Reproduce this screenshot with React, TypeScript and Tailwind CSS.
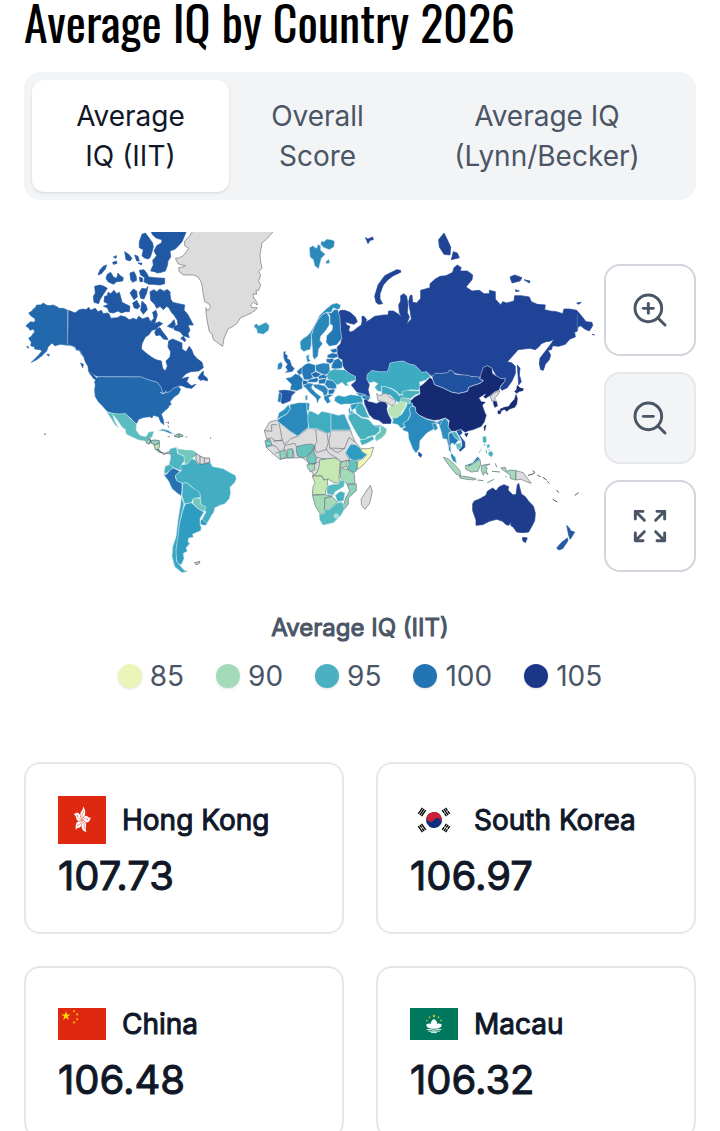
import { useState } from "react";
import { ZoomIn, ZoomOut } from "lucide-react";

type Shape = [fill: string, points: string];

const NO_DATA = "#dcdcdc";

// Americas, northern half
const northAmerica: Shape[] = [
  ["#2268ad", "143,256 130,250 118,250 112,246 100,240 88,242 78,240 70,234 62,240 50,240 46,248 40,252 36,258 26,264 34,274 44,280 46,288 40,292 32,290 22,298 18,304 26,308 30,316 40,312 44,320 34,334 26,340 34,352 32,362 44,366 44,372 60,374 66,378 56,390 38,408 34,412 50,404 66,392 80,378 84,366 96,354 104,362 122,358 143,361"],
  ["#2158a3", "146,256 165,264 178,254 190,252 198,254 206,247 212,256 226,250 234,260 244,256 250,266 262,264 268,268 272,280 292,278 302,272 316,276 328,284 340,280 350,284 356,274 368,282 384,276 392,290 402,280 398,262 408,256 412,270 404,296 418,290 428,296 414,306 410,312 396,316 386,330 376,336 366,356 364,372 378,384 394,396 408,404 424,408 428,430 436,438 442,424 438,408 450,396 452,380 444,366 446,348 458,342 472,348 486,354 486,372 498,380 508,364 516,376 520,388 530,400 546,412 550,428 536,438 512,440 498,446 482,462 496,458 506,456 500,470 514,482 528,478 516,490 500,488 486,482 480,482 474,488 460,490 450,500 428,506 424,488 412,472 384,464 362,456 232,454 220,448 206,438 204,424 196,410 192,398 184,388 178,376 170,376 164,366 154,362 143,361"],
  ["#2268ad", "234,456 362,457 386,465 412,473 424,488 428,506 450,500 460,490 474,486 482,492 476,506 462,516 450,530 452,536 454,537 440,550 446,547 430,561 424,567 430,585 432,599 422,591 416,575 400,571 396,579 390,575 372,577 356,583 350,595 342,591 334,579 324,573 316,567 292,567 276,563 262,559 248,543 236,531 226,515 224,495 226,480 224,470"],
  ["#2158a3", "388,8 510,8 498,22 486,50 474,64 466,72 450,78 452,96 444,108 442,122 436,138 424,142 412,144 404,140 392,138 396,128 400,120 398,106 410,92 402,78 410,62 424,54 426,44 410,40 398,30"],
  ["#2158a3", "358,50 366,28 376,24 388,40 398,54 400,66 394,88 390,98 384,102 372,98 366,92 370,74 358,68"],
  ["#2158a3", "358,136 372,134 380,144 386,156 404,158 434,160 434,176 420,180 398,178 386,178 372,170 374,158 362,150"],
  ["#2158a3", "330,144 342,140 348,152 350,166 338,172 332,164"],
  ["#2158a3", "358,156 368,160 368,170 360,170"],
  ["#2158a3", "314,80 326,88 336,100 330,108 318,104"],
  ["#2158a3", "344,90 354,94 358,108 350,108"],
  ["#2158a3", "234,150 240,134 250,124 260,120 256,132 244,146"],
  ["#2158a3", "258,160 262,148 272,142 280,156 290,160 294,144 298,150 310,158 308,168 290,170 280,178 264,170"],
  ["#2158a3", "280,96 290,92 288,100"],
  ["#2158a3", "278,112 290,108 290,116 280,118"],
  ["#2158a3", "354,114 366,114 364,120"],
  ["#2158a3", "224,184 240,180 252,184 262,190 250,208 240,224 236,236 222,232 220,214 226,204"],
  ["#2158a3", "254,214 262,212 264,202 272,206 282,196 290,206 298,202 302,216 306,232 318,238 330,244 328,260 316,260 304,264 294,258 280,264 268,262 262,248 250,244 266,238 252,230"],
  ["#2158a3", "330,204 340,192 350,198 352,216 342,224"],
  ["#2158a3", "358,202 366,190 378,192 384,184 380,204 372,222 362,220"],
  ["#2158a3", "338,234 350,226 360,244 352,252 342,248"],
  ["#2158a3", "366,228 378,240 382,254 370,268 362,256"],
  ["#2158a3", "390,200 402,194 410,200 420,192 430,198 450,206 452,222 458,232 476,236 494,240 492,256 502,266 516,292 520,300 504,300 510,316 504,326 508,338 490,332 480,320 462,314 462,304 474,300 472,286 462,270 454,262 448,250 440,244 430,254 420,244 410,250 404,238 392,226"],
  ["#2158a3", "434,196 444,194 452,204 440,204"],
  ["#2158a3", "404,322 410,312 420,308 426,318 440,336 444,344 430,342 420,330 408,332"],
  ["#2158a3", "482,340 490,334 498,346 494,350"],
  ["#2158a3", "452,296 462,284 466,298 458,310 442,304"],
  ["#2158a3", "534,458 542,446 550,438 550,450 562,460 562,468 550,464 540,466"],
  ["#2158a3", "206,440 218,448 230,460 234,468 220,460"],
  ["#2158a3", "182,414 190,418 188,428"],
  ["#2268ad", "80,388 88,388 86,394"],
  ["#2268ad", "20,364 26,366 24,370"],
];

const greenland =
  "66,6 66,22 58,34 44,48 44,62 56,70 40,92 28,98 16,100 24,116 36,120 46,122 38,126 26,128 28,140 40,150 70,150 84,156 92,168 96,180 98,196 100,210 104,230 116,236 122,246 112,258 108,248 108,262 112,290 118,320 126,326 130,344 146,356 158,364 162,340 174,312 186,306 200,296 212,278 226,272 240,266 256,256 262,248 246,248 242,240 250,232 262,240 262,234 250,216 250,206 260,208 258,196 266,196 272,180 266,168 272,150 266,140 276,130 272,110 270,90 276,54 290,42 308,22 320,6";

// Americas, southern half
const southAmerica: Shape[] = [
  ["#5bbdbf", "260,66 276,70 300,72 316,70 330,84 342,96 350,102 348,120 360,136 378,140 386,126 402,124 396,142 384,146 378,154 356,150 334,140 318,132 316,118 308,114 290,88 278,74 284,92 296,114 286,106 272,84"],
  ["#2c8abd", "414,122 428,117 444,121 456,128 462,132 448,130 430,122"],
  ["#4db6c0", "448,178 458,174 470,172 472,190 492,198 496,210 486,222 484,242 462,234 446,226 452,204"],
  ["#72c8bd", "472,176 484,178 500,180 514,180 526,184 530,196 516,206 512,216 502,222 494,222 492,198 474,190"],
  ["#46b0bf", "436,228 450,224 460,234 442,248 436,252 432,246"],
  ["#2472b2", "430,252 438,254 444,248 450,240 460,234 480,244 466,258 468,268 476,274 486,280 486,300 484,318 470,308 456,296 446,274"],
  ["#43aec2", "484,242 482,230 486,224 502,222 516,206 526,210 534,222 570,216 578,230 590,232 610,236 620,242 646,256 649,266 644,278 630,292 632,310 628,326 614,342 600,346 584,354 582,366 576,374 560,402 546,388 558,366 550,356 542,340 540,314 526,300 510,286 500,278 488,280 470,272 466,256"],
  ["#41adc2", "488,280 500,278 516,292 538,306 542,322 520,326 514,338 494,342 486,318"],
  ["#72c8bd", "520,326 530,324 540,326 544,344 558,350 554,364 546,362 534,356 518,340"],
  ["#3399bf", "546,386 562,402 556,406 550,406 540,402 542,392"],
  ["#2f9dc1", "496,342 514,338 534,356 552,366 540,386 540,404 544,412 542,422 524,430 518,432 520,442 506,444 504,456 510,460 498,474 502,484 490,490 492,506 484,524 472,520 466,490 472,440 478,400 490,356"],
  ["#3ba8c0", "484,318 492,342 488,360 478,400 474,440 468,480 470,514 480,526 492,540 504,544 486,548 464,530 456,500 458,470 468,440 474,390 482,340"],
];

const southAmericaOutlined: Shape[] = [
  ["#8cd1bb", "378,154 388,144 392,152 388,162 380,160"],
  ["#8cd1bb", "390,152 404,150 418,152 418,160 404,166 396,160"],
  ["#c5e8b3", "402,166 418,160 418,172 414,180 406,178"],
  ["#5bbdbf", "408,178 418,180 424,188 416,186"],
  [NO_DATA, "422,186 436,190 448,184 450,192 440,190 430,194"],
  [NO_DATA, "528,190 540,198 552,204 568,204 570,216 552,222 536,222 528,210"],
  ["#8cd1bb", "462,138 472,132 482,132 490,138 478,142 466,140"],
  [NO_DATA, "524,518 540,514 536,522 528,524"],
];

// Russian mainland and islands
const russia: Shape[] = [
  ["#1f4396", "266,262 272,256 284,256 300,262 316,276 322,290 312,298 296,294 286,290 290,300 300,304 296,314 300,322 310,318 322,308 334,300 336,290 336,274 342,274 350,284 346,292 360,284 374,274 388,272 402,270 414,270 416,258 430,258 446,268 454,276 448,262 446,240 452,228 452,212 462,206 470,214 474,240 472,262 478,276 470,298 484,282 480,256 476,230 480,212 486,210 488,232 500,234 512,220 512,196 540,188 540,176 556,162 570,154 588,152 600,146 608,142 612,128 622,120 634,128 630,138 652,138 668,150 666,164 648,186 666,198 688,196 702,206 718,206 718,196 736,200 736,222 752,240 758,230 770,234 792,228 794,212 814,212 838,216 844,230 862,238 886,240 884,254 900,258 920,260 938,266 942,252 958,252 980,256 994,272 1008,290 1026,292 1028,302 1018,318 1004,312 992,302 984,306 982,318 974,322 976,336 960,342 946,358 926,364 908,362 904,374 894,376 902,390 898,404 886,418 880,436 872,434 868,416 870,400 882,384 896,366 906,352 912,342 902,348 888,350 874,356 866,366 856,374 840,370 804,374 796,384 772,410 786,414 796,424 796,446 786,468 772,488 756,496 750,488 760,476 768,462 756,460 746,460 738,450 728,432 718,424 704,424 700,440 696,456 678,456 642,450 614,444 598,434 594,446 558,446 546,454 530,440 516,442 494,420 480,418 460,408 440,410 420,414 416,430 412,440 386,440 366,436 352,448 350,462 358,480 354,494 358,510 360,520 338,510 320,500 312,490 304,480 318,468 316,454 300,446 286,434 278,420 278,404 266,398 262,384 262,366 272,356 276,340 270,320 272,300 266,280"],
  ["#1f4396", "378,232 374,214 384,180 404,152 420,144 440,134 452,136 452,142 430,152 414,164 400,180 390,206 390,222 398,236 386,238"],
  ["#1f4396", "346,38 354,42 368,36 370,44 360,46 354,56 350,46"],
  ["#1f4396", "566,44 582,24 590,40 602,66 600,90 582,88 568,66"],
  ["#1f4396", "604,104 610,80 622,84 628,98"],
  ["#1f4396", "780,156 794,150 816,158 810,168 786,174"],
  ["#1f4396", "822,164 840,168 838,174"],
  ["#1f4396", "796,194 808,198 798,200"],
  ["#1f4396", "980,234 994,232 986,238"],
  ["#1f4396", "802,420 810,430 808,450 814,470 806,480 804,450"],
];

// Europe, central Asia and the Middle East
const eurasia: Shape[] = [
  ["#2b8ab9", "178,68 188,62 200,70 204,58 212,62 212,76 226,88 214,100 206,132 194,122 190,104 180,96"],
  ["#2b8ab9", "214,48 222,50 230,42 244,44 254,48 252,66 238,74 222,68 212,58"],
  ["#2b8ab9", "228,110 236,102 240,114 228,116"],
  ["#3399bf", "12,300 20,296 26,302 48,292 58,302 56,316 40,328 22,324 20,312 14,308"],
  ["#2c8fbb", "152,372 150,350 160,340 170,334 180,324 196,296 208,272 228,252 246,238 260,234 272,240 270,250 262,254 250,248 244,262 230,262 218,268 204,284 192,306 184,332 184,360 180,374 170,376 162,380"],
  ["#2a88b9", "188,384 186,356 184,332 192,306 204,284 218,268 230,262 238,276 238,300 228,316 212,334 210,346 218,356 206,372 204,392 194,404 188,394"],
  ["#2279b5", "232,262 244,264 252,254 264,254 270,280 272,318 276,340 260,360 238,364 228,352 230,332 246,316 248,302 240,296 240,272"],
  ["#2472b2", "240,374 260,370 262,382 248,384"],
  ["#2472b2", "232,390 246,384 262,386 264,396 252,400 232,398"],
  ["#2472b2", "228,402 250,400 252,408 242,416 230,412"],
  ["#2279b5", "244,430 246,418 254,404 266,400 278,414 276,430 256,432"],
  ["#2c8fbb", "168,394 178,388 176,400 182,408 172,412"],
  ["#2067ad", "100,380 108,378 106,386 114,392 112,400 120,404 126,422 134,430 128,440 104,444 112,436 106,426 112,418 104,408 100,396"],
  ["#2b85bb", "84,416 94,410 98,420 94,432 82,434"],
  ["#2472b2", "140,440 152,428 158,426 156,446 148,450"],
  ["#2279b5", "156,426 166,418 176,414 196,420 196,440 184,446 190,458 178,464 162,464 156,446"],
  ["#2b85bb", "196,420 220,414 238,416 240,436 236,446 226,450 214,446 198,438"],
  ["#2279b5", "106,460 124,456 136,446 148,450 160,464 156,474 158,490 140,498 120,494 124,478"],
  ["#2157a3", "86,496 104,494 120,496 138,500 126,512 122,528 98,538 92,532"],
  ["#2279b5", "86,503 95,505 92,532 83,530"],
  ["#2067ad", "184,446 198,440 214,448 200,458 190,456"],
  ["#2472b2", "176,464 200,458 206,464 200,472 172,472"],
  ["#2067ad", "158,466 174,468 172,478 158,480"],
  ["#2279b5", "204,454 220,448 234,454 228,460 206,462"],
  ["#2472b2", "206,464 230,460 224,476 206,476"],
  ["#2b85bb", "230,464 248,466 258,478 260,490 248,492 234,490 224,478"],
  ["#2472b2", "234,494 256,492 250,506 236,508"],
  ["#2b85bb", "188,478 206,478 224,482 234,494 232,508 222,514 218,502 208,496 194,488"],
  ["#2b85bb", "222,514 238,508 250,510 236,518 242,530 232,536 222,522"],
  ["#2b85bb", "158,482 176,474 190,476 184,488 196,502 214,516 208,522 202,536 198,520 178,502 168,490"],
  ["#2b85bb", "166,512 172,510 172,524 166,526"],
  ["#41adc0", "238,438 254,432 270,434 284,434 300,446 316,454 316,466 300,470 290,474 296,482 286,482 276,472 262,480 256,476 248,466 234,464 230,452"],
  ["#3dabc1", "350,462 352,448 366,436 386,440 412,440 416,430 420,414 440,410 460,408 480,418 494,420 516,442 530,440 542,454 526,466 508,472 510,482 506,496 480,494 462,502 450,510 438,498 424,490 408,486 394,484 394,500 382,498 374,486 384,476 372,470 358,474"],
  ["#3ba8c0", "394,484 410,486 424,492 438,500 448,512 462,506 460,514 472,520 456,524 446,534 430,520 420,510 404,506 396,512"],
  ["#46b0bf", "456,500 470,496 508,498 510,505 494,511 482,521 460,519 458,509"],
  ["#72c8bd", "452,518 460,521 480,521 488,533 470,535 452,533"],
  ["#2f9dc1", "255,517 265,511 283,515 301,509 319,511 333,513 337,523 339,533 319,535 303,537 285,537 273,539 261,533 253,527"],
  ["#2b8abd", "317,503 333,505 347,509 345,513 329,513"],
  ["#2b8abd", "333,513 345,511 361,517 355,527 343,525"],
  ["#1b3484", "341,525 349,521 355,529 367,531 379,535 391,529 407,531 413,541 411,553 417,571 425,585 423,597 399,597 387,587 371,583 357,569 349,551 343,537"],
  ["#41adc0", "315,545 327,533 337,535 345,549 351,565 359,579 337,577 319,565 317,555"],
  ["#2f9dc1", "301,539 327,533 317,549 305,557"],
  ["#46b0bf", "297,561 305,557 313,561 299,571"],
  ["#2472b2", "295,555 301,545 299,569"],
  ["#47b2bd", "295,571 311,563 321,569 335,579 355,583 363,591 369,599 381,603 389,607 389,619 375,631 355,635 345,643 331,643 323,631 315,617 303,595 295,581"],
  ["#47b2bd", "329,645 345,643 367,633 373,643 351,655 335,661"],
  ["#6cc5bd", "375,641 377,631 391,621 391,607 395,601 411,613 407,627 395,639 379,649"],
  ["#2f9dc1", "371,601 389,601 393,597 389,607 375,603"],
];

// Southern Asia and Oceania
const asiaPacific: Shape[] = [
  ["#152a72", "92,92 104,80 120,72 118,50 132,40 150,22 158,28 164,44 190,54 214,66 236,70 262,64 266,52 280,46 300,40 310,32 298,26 302,16 306,4 310,-8 322,-13 336,-6 338,10 346,16 364,26 376,24 374,34 362,48 358,60 344,66 330,78 316,86 310,80 316,72 298,84 304,94 318,96 308,106 316,128 320,136 314,156 304,170 280,180 264,184 256,188 244,180 226,184 212,184 204,170 208,152 196,144 178,150 164,152 140,146 118,136 106,124 106,112 92,102"],
  ["#2052a0", "156,19 166,10 186,10 204,8 208,0 220,4 224,12 240,14 264,16 276,20 288,20 302,22 298,26 310,32 300,40 280,46 266,52 262,64 236,70 214,66 190,54 164,44 158,28"],
  ["#152a72", "338,94 350,92 354,108 344,114 340,104"],
  ["#2f9dc1", "36,142 48,144 64,134 78,112 82,100 98,100 98,108 88,116 92,132 84,150 70,160 74,172 62,174 54,164 36,160 40,150"],
  ["#b8e4b5", "26,114 34,108 50,102 62,94 72,96 78,94 76,112 66,124 62,134 48,144 32,140 24,128"],
  ["#2b8abd", "94,108 106,112 108,126 118,136 140,148 164,154 178,152 194,146 186,156 180,170 176,162 168,160 162,178 152,182 140,190 120,212 118,236 108,250 98,236 86,206 84,186 72,182 66,176 76,172 70,160 86,148 92,132 88,116"],
  [NO_DATA, "164,152 176,150 176,156 166,157"],
  ["#2f8fbe", "156,160 168,160 174,176 164,182"],
  ["#2f8fbe", "178,168 188,150 196,144 206,156 204,170 214,184 206,190 208,212 214,236 206,232 200,208 188,206 184,186"],
  ["#2279b5", "206,192 216,186 226,204 236,210 224,224 216,218 210,228 214,248 206,240 208,222"],
  ["#2f8fbe", "214,248 226,262 230,280 218,272 212,258"],
  ["#46b0bf", "216,184 228,186 244,216 230,206 222,200"],
  ["#2052a0", "228,182 244,178 248,190 240,196 256,216 256,232 240,246 236,240 246,226 244,210"],
  ["#66c2bd", "226,222 244,218 244,232 232,240"],
  ["#46b0bf", "308,200 318,198 320,214 316,220 308,216"],
  ["#46b0bf", "320,224 328,222 330,230 322,236"],
  ["#46b0bf", "324,248 334,242 340,252 334,262 326,256"],
  ["#8cd1bb", "296,246 306,234 304,240 298,250"],
  ["#2279b5", "260,284 278,278 292,260 300,266 280,280 268,288"],
];

// Countries whose whole border is coast
const islands: Shape[] = [
  ["#152a72", "404,64 410,60 412,46 420,54 430,56 428,62 418,64 410,70"],
  ["#152a72", "408,74 412,86 410,102 404,112 390,116 380,124 374,118 362,122 360,118 374,112 386,110 394,98 404,88"],
  ["#152a72", "354,122 364,124 360,132 354,130"],
  ["#2052a0", "116,246 126,254 122,262 116,256"],
  ["#152a72", "254,192 264,190 260,200"],
  ["#152a72", "312,170 318,165 314,182"],
  ["#1f3c8c", "278,402 282,394 300,386 318,376 322,364 338,354 348,362 358,350 372,344 386,350 384,360 398,374 408,374 412,344 416,340 424,372 436,380 446,394 460,408 466,430 464,452 456,468 446,486 428,488 410,486 400,472 392,466 394,456 386,466 378,464 368,454 350,448 328,454 308,464 288,466 288,450 278,422"],
  ["#1f3c8c", "428,502 442,504 436,518 428,512"],
  ["#2157a3", "560,466 568,474 572,482 584,486 576,500 570,508 566,496"],
  ["#2157a3", "530,534 546,516 562,504 564,512 548,536 536,540"],
];

const asiaOutlined: Shape[] = [
  [NO_DATA, "-10,70 -4,76 6,76 10,70 24,72 30,82 48,92 46,100 36,108 20,98 4,94 -6,92"],
  [NO_DATA, "330,80 344,68 360,62 354,74 344,84 346,90 336,94 334,86"],
  ["#a3dbb8", "190,262 204,266 224,284 240,302 242,318 228,312 208,288"],
  ["#a3dbb8", "238,318 262,320 288,326 284,330 260,328 240,324"],
  ["#a3dbb8", "256,286 268,288 282,280 300,268 302,282 294,304 274,306 258,298"],
  ["#a3dbb8", "304,286 330,282 314,290 322,294 318,302 324,314 314,306 310,316 304,304"],
  ["#a3dbb8", "362,294 376,292 380,304 390,300 408,302 408,330 392,326 390,314 374,304"],
  [NO_DATA, "408,302 430,308 440,322 454,340 436,334 424,328 408,330"],
];

const africaOutlined: Shape[] = [
  [NO_DATA, "28,182 44,156 66,150 106,184 130,198 160,174 186,178 216,190 228,182 288,182 292,196 300,214 316,234 300,230 280,238 272,250 284,270 258,276 240,266 214,268 196,272 196,300 186,308 176,316 168,300 160,276 140,262 122,264 96,264 74,268 50,248 34,232 36,210"],
  ["#8cd1bb", "74,244 92,240 96,262 76,268"],
  ["#8cd1bb", "98,238 112,236 114,262 98,264"],
  ["#66c2bd", "30,212 44,208 52,226 34,232"],
  ["#66c2bd", "124,230 148,224 170,222 180,228 168,248 154,258 146,264 128,258 124,244"],
  ["#72c8bd", "180,228 176,244 184,262 182,282 160,280 154,262 170,248"],
  ["#a3dbb8", "156,284 178,280 180,298 166,306 158,292"],
  ["#c5e8b3", "194,270 214,266 240,264 256,272 254,300 252,324 256,340 236,338 218,326 212,334 200,318 172,318 186,308 192,290"],
  ["#a3dbb8", "258,276 276,272 276,290 256,294"],
  ["#66c2bd", "280,270 306,272 306,300 298,308 276,296 282,284"],
  ["#f1f9b5", "318,236 338,236 356,232 348,258 322,288 308,298 308,272 322,268 336,254 320,244"],
  ["#a3dbb8", "256,296 278,298 298,312 300,340 276,342 256,324"],
  ["#c5e8b3", "172,318 200,318 206,330 218,328 218,346 210,374 172,374 174,350 180,340"],
  ["#8cd1bb", "276,344 304,342 304,362 280,384 280,402 268,418 264,410 272,384 284,362"],
  ["#a3dbb8", "172,376 208,374 232,378 210,384 208,430 196,432 182,410"],
  ["#a3dbb8", "210,384 232,380 246,396 224,418 208,420"],
  [NO_DATA, "318,388 332,366 346,346 352,364 344,400 330,418 320,406"],
];

const africa: Shape[] = [
  ["#2b93bf", "66,150 72,128 88,118 100,104 106,116 96,132 76,142"],
  ["#2b8abd", "66,152 78,142 96,132 106,116 104,104 130,98 156,98 156,124 160,140 160,172 128,198 106,184"],
  ["#2f9dc1", "154,98 164,100 162,122 156,122"],
  ["#41adc0", "160,124 170,124 190,134 200,124 228,130 228,188 216,190 186,176 162,176 158,150"],
  ["#3ba4c1", "228,130 250,136 268,132 276,150 284,168 288,180 228,180"],
  ["#2f9dc1", "278,236 288,222 302,224 318,236 320,244 336,254 320,268 298,272 284,266 272,248"],
  ["#56bbbe", "216,348 236,342 250,342 256,330 270,334 266,350 240,366 236,376 216,372"],
  ["#46b0bf", "240,376 256,364 270,368 266,392 248,396"],
  ["#56bbbe", "192,432 208,432 208,420 224,418 246,398 262,396 268,418 258,436 236,458 204,466 194,450"],
];

function Shapes({ items, solid = false }: { items: Shape[]; solid?: boolean }) {
  return (
    <>
      {items.map(([fill, points]) => (
        <polygon key={points} fill={fill} stroke={solid ? fill : undefined} points={points} />
      ))}
    </>
  );
}

const land = { stroke: "#dcebf5", strokeWidth: 1.5, strokeLinejoin: "round" } as const;
const outlined = { stroke: "#6b7280", strokeWidth: 2, strokeLinejoin: "round" } as const;

function WorldMap({ zoom }: { zoom: number }) {
  return (
    <svg viewBox="24 232 572 342" role="img" aria-label="World map of average IQ" className="block h-auto w-full">
      <g style={{ transform: `scale(${zoom})`, transformOrigin: "center" }}>
        <g transform="translate(20 225) scale(.33333)" strokeWidth="2">
          <Shapes items={northAmerica} solid />
          <path d="M143 256V361L154 362 164 366 170 376 178 376 192 398M232 455H362L384 464 412 472 424 488 428 506 450 500 460 490 480 482" fill="none" stroke="#9fc3e2" strokeWidth="2.2" />
          <path d="M420 502l8 4 12-8" fill="none" stroke="#dcebf5" strokeWidth="2" />
        </g>
        <g transform="translate(170 225) scale(.33333)">
          <polygon points={greenland} fill={NO_DATA} {...outlined} />
        </g>
        <g transform="translate(20 390) scale(.33333)" {...land}>
          <Shapes items={southAmerica} />
          <g {...outlined} stroke="#555b64">
            <Shapes items={southAmericaOutlined} />
            <path d="M540 198v22M553 204v16M438 98l8-2-1 6M444 106l2 7M390 146l4 16M478 132l-2 10M496 141h6M443 140h7M572 142v5" fill="none" />
          </g>
          <path d="M72 132l6 1" stroke="#3f78ad" strokeWidth="3" />
        </g>
        <g transform="translate(250 225) scale(.33333)" {...land}>
          <g strokeWidth="2">
            <Shapes items={russia} solid />
          </g>
          <Shapes items={eurasia} />
          <path d="M982 268v52" stroke="#7f9acb" strokeWidth="1.5" />
          <path d="M1026 328l8 2" stroke="#1f4396" strokeWidth="3" />
        </g>
        <g transform="translate(255 370) scale(.33333)">
          <g {...outlined}>
            <Shapes items={africaOutlined} />
            <path
              fill="none"
              d="M28 182l22 2 0-20h16M72 158l10 52-28 4M82 210l6 14 20-18 22-8M124 230l-4-10-30 6-4 14M182 180l4 34-8 16M216 190l4 26-6 22 8 12M178 230l6 18 32-10M228 182l-6 30 2 22 44 2 14-34 18 14M222 250l26 16M184 262l30 6M224 234l24 14 22-14M52 226l12 4 10 14M60 250l12-4M114 240l4 22M170 284l20-8M36 206l14-2 10 8h22"
            />
          </g>
          <g {...land}>
            <Shapes items={africa} />
            <circle cx="244" cy="438" r="7" fill="#a3dbd8" />
            <path d="M34 220h14" stroke="#b9e4e4" strokeWidth="2" />
          </g>
        </g>
        <g transform="translate(380 370) scale(.33333)" {...land}>
          <Shapes items={asiaPacific} />
          <g strokeWidth="2">
            <Shapes items={islands} solid />
          </g>
          <g {...outlined}>
            <Shapes items={asiaOutlined} />
            <path d="M292 330l18 2M322 338l20-10M346 280l4 12M336 304l24 2M376 318l4 4" fill="none" stroke="#6f9080" strokeWidth="3" />
            <path d="M444 316l16-4 4-6-6-4M472 316l10 4M488 322l12 8M502 334l6 6M530 360l6 8M518 388l14 8M584 376l12-8" fill="none" stroke="#555b64" strokeWidth="3" />
          </g>
          <path d="M318 240l2 10M326 238l4 4M312 222l4 6" fill="none" stroke="#46b0bf" strokeWidth="3" />
        </g>
      </g>
    </svg>
  );
}

function ExpandArrows() {
  return (
    <svg viewBox="0 0 24 24" className="size-10" fill="none" stroke="currentColor" strokeWidth="1.75" strokeLinecap="round" strokeLinejoin="round" aria-hidden="true">
      <path d="M3.200 7.800V3.200h4.600M3.200 3.200 8.600 8.600M16.200 3.200h4.600v4.600M20.800 3.200 15.400 8.600M3.200 16.200v4.600h4.600M3.200 20.800 8.600 15.400M20.800 16.200v4.600h-4.600M20.800 20.800 15.400 15.400" />
    </svg>
  );
}

function HongKongFlag() {
  return (
    <svg viewBox="0 0 48 48" className="w-12" aria-hidden="true">
      <rect width="48" height="48" fill="#de2910" />
      <g transform="translate(8 0) scale(.667 1)">
        {[8, 80, 152, 224, 296].map((angle) => (
          <g key={angle} transform={`rotate(${angle} 24 24)`}>
            <path d="M24 23.500C20.200 20.500 19.800 17.500 22 15.200 23.500 13.700 24 13 23.500 10.500 27.500 12.500 29 16.500 27 19.500 25.300 20 25 21.800 24 23.500Z" fill="#fff" />
            <path d="M24 22C22.700 19.500 23.500 17.500 24.700 16" fill="none" stroke="#de2910" strokeWidth=".5" />
            <circle cx="24.900" cy="15.600" r=".6" fill="#de2910" />
          </g>
        ))}
      </g>
    </svg>
  );
}

function Trigram({ x, y, angle, broken }: { x: number; y: number; angle: number; broken: number[] }) {
  return (
    <g transform={`translate(${x} ${y}) rotate(${angle})`}>
      {[-2, 0, 2].map((dy, i) => (
        <path key={dy} d={broken.includes(i) ? `M-3.700 ${dy}h3.300M.4 ${dy}h3.300` : `M-3.700 ${dy}h7.400`} stroke="#000" strokeWidth="1.400" />
      ))}
    </g>
  );
}

function SouthKoreaFlag() {
  return (
    <svg viewBox="0 0 48 32" className="w-12" aria-hidden="true">
      <rect width="48" height="32" fill="#fff" />
      <g transform="rotate(33.700 24 16)">
        <circle cx="24" cy="16" r="8" fill="#0f2f7f" />
        <path d="M16 16a8 8 0 0 1 16 0a4 4 0 0 0-8 0a4 4 0 0 1-8 0Z" fill="#cd1f37" />
      </g>
      <Trigram x={12} y={8} angle={-56} broken={[]} />
      <Trigram x={36} y={8} angle={56} broken={[0, 2]} />
      <Trigram x={12} y={24} angle={56} broken={[1]} />
      <Trigram x={36} y={24} angle={-56} broken={[0, 1, 2]} />
    </svg>
  );
}

const STAR = "0,-1 .225,-.309 .951,-.309 .363,.118 .588,.809 0,.382 -.588,.809 -.363,.118 -.951,-.309 -.225,-.309";

function Star({ x, y, r, angle = 0, fill }: { x: number; y: number; r: number; angle?: number; fill: string }) {
  return <polygon points={STAR} fill={fill} transform={`translate(${x} ${y}) rotate(${angle}) scale(${r})`} />;
}

function ChinaFlag() {
  return (
    <svg viewBox="0 0 48 32" className="w-12" aria-hidden="true">
      <rect width="48" height="32" fill="#de2910" />
      <Star x={8} y={8} r={4.8} fill="#ffde00" />
      <Star x={16} y={3.2} r={1.6} angle={24} fill="#ffde00" />
      <Star x={19.2} y={6.4} r={1.6} angle={46} fill="#ffde00" />
      <Star x={19.2} y={11.2} r={1.6} angle={0} fill="#ffde00" />
      <Star x={16} y={14.4} r={1.6} angle={22} fill="#ffde00" />
    </svg>
  );
}

function MacauFlag() {
  return (
    <svg viewBox="0 0 48 32" className="w-12" aria-hidden="true">
      <rect width="48" height="32" fill="#00785e" />
      <Star x={24} y={8} r={1.9} fill="#fbd116" />
      <Star x={19.5} y={9.3} r={1.3} angle={-30} fill="#fbd116" />
      <Star x={28.5} y={9.3} r={1.3} angle={30} fill="#fbd116" />
      <Star x={16.8} y={12.5} r={1.3} angle={-50} fill="#fbd116" />
      <Star x={31.2} y={12.5} r={1.3} angle={50} fill="#fbd116" />
      <path d="M24 11c2.300 1.200 3.400 3 3 5 1.300-.8 3-.6 4.800.6-.1 3-2.800 4.200-7.800 4.200s-7.700-1.200-7.800-4.200c1.800-1.200 3.500-1.400 4.800-.6-.4-2 .7-3.800 3-5Z" fill="#fff" />
      <path d="M16.600 21.600h5l2.400.8 2.400-.8h5M18.300 23.200h11.400M21 24.600h6" stroke="#fff" strokeWidth=".9" fill="none" />
    </svg>
  );
}

const tabs = [
  ["Average", "IQ (IIT)"],
  ["Overall", "Score"],
  ["Average IQ", "(Lynn/Becker)"],
];

const legend = [
  { value: 85, dot: "bg-[#e9f6b8]" },
  { value: 90, dot: "bg-[#a3dbb8]" },
  { value: 95, dot: "bg-[#49b1c1]" },
  { value: 100, dot: "bg-[#2275b2]" },
  { value: 105, dot: "bg-[#1c3687]" },
];

const countries = [
  { name: "Hong Kong", score: "107.73", Flag: HongKongFlag },
  { name: "South Korea", score: "106.97", Flag: SouthKoreaFlag },
  { name: "China", score: "106.48", Flag: ChinaFlag },
  { name: "Macau", score: "106.32", Flag: MacauFlag },
];

const mapButton =
  "flex size-23 items-center justify-center rounded-2xl border-2 border-gray-300 bg-white text-gray-600 disabled:border-gray-200 disabled:bg-gray-100";

export default function App() {
  const [active, setActive] = useState(0);
  const [zoom, setZoom] = useState(1);

  return (
    <main className="bg-white px-6 pb-8 font-['Inter',sans-serif] text-gray-900">
      <h1 className="font-['Oswald','Liberation_Sans_Narrow',sans-serif] text-5xl leading-11 text-black">
        Average IQ by Country 2026
      </h1>

      <div role="tablist" className="mt-7 grid grid-cols-[197fr_177fr_282fr] rounded-2xl bg-gray-100 p-2">
        {tabs.map(([first, second], i) => (
          <button
            key={first}
            type="button"
            role="tab"
            aria-selected={active === i}
            onClick={() => setActive(i)}
            className={`rounded-xl py-4 text-[28px] leading-10 ${active === i ? "bg-white text-gray-900 shadow-sm" : "text-gray-600"}`}
          >
            {first}
            <br />
            {second}
          </button>
        ))}
      </div>

      <section className="mt-8 flex items-start gap-2">
        <div className="min-w-0 flex-1 overflow-hidden">
          <WorldMap zoom={zoom} />
        </div>
        <div className="flex flex-col gap-4 pt-8">
          <button type="button" aria-label="Zoom in" className={mapButton} onClick={() => setZoom(zoom * 1.5)}>
            <ZoomIn size={40} strokeWidth={1.75} />
          </button>
          <button type="button" aria-label="Zoom out" className={mapButton} disabled={zoom <= 1} onClick={() => setZoom(zoom / 1.5)}>
            <ZoomOut size={40} strokeWidth={1.75} />
          </button>
          <button type="button" aria-label="Full screen" className={mapButton}>
            <ExpandArrows />
          </button>
        </div>
      </section>

      <section className="mt-[38px] flex flex-col items-center text-gray-600">
        <h2 className="text-2xl [-webkit-text-stroke:1px_currentColor]">Average IQ (IIT)</h2>
        <ul className="mt-3 flex gap-8">
          {legend.map(({ value, dot }) => (
            <li key={value} className="flex items-center gap-2 text-[28px] leading-10">
              <span className={`size-6 rounded-full shadow-sm ${dot}`} />
              {value}
            </li>
          ))}
        </ul>
      </section>

      <section className="mt-[66px] grid grid-cols-2 gap-8">
        {countries.map(({ name, score, Flag }) => (
          <article key={name} className="rounded-2xl border-2 border-gray-200 p-8">
            <div className="flex h-12 items-center gap-4">
              <Flag />
              <h3 className="text-[28px] leading-10 [-webkit-text-stroke:1px_currentColor]">{name}</h3>
            </div>
            <p className="mt-2 text-[40px] leading-12 [-webkit-text-stroke:1px_currentColor]">{score}</p>
          </article>
        ))}
      </section>
    </main>
  );
}
